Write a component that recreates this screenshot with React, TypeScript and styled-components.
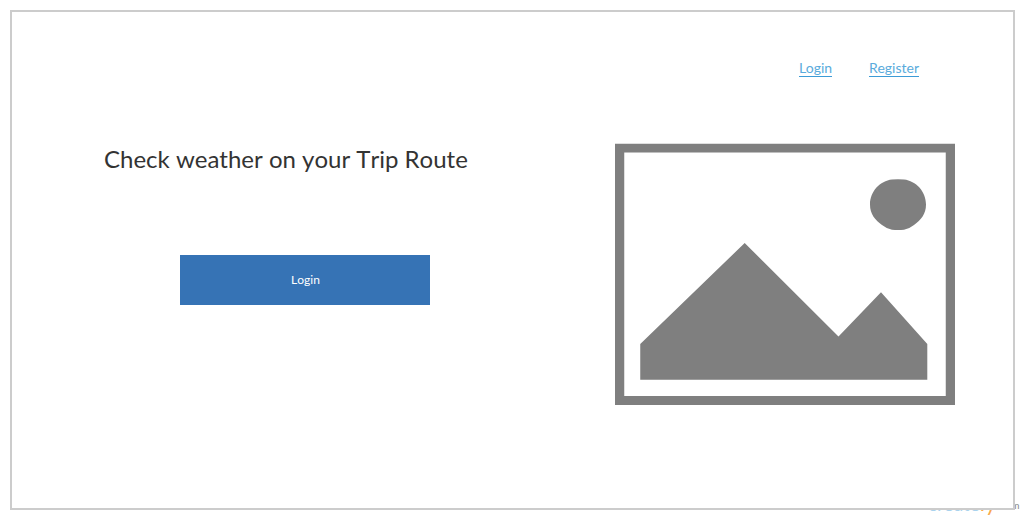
import React from "react";
import styled, { createGlobalStyle } from "styled-components";

const GlobalStyle = createGlobalStyle`
  * { box-sizing: border-box; }
  body { margin: 0; background: #fff; font-family: Lato, "Open Sans", sans-serif; }
`;

const Page = styled.div`
  position: relative;
  width: 1025px;
  height: 520px;
  padding: 10px;
  overflow: hidden;
`;

const Frame = styled.div`
  position: relative;
  width: 1005px;
  height: 500px;
  border: 2px solid #ccc;
  background: #fff;
`;

const Nav = styled.nav`
  display: flex;
  justify-content: flex-end;
  gap: 37px;
  padding: 48px 94px 0 0;
  height: 131px;
`;

const NavLink = styled.a`
  height: 17px;
  font-size: 14px;
  line-height: 16px;
  color: #5aabdc;
  border-bottom: 1px solid #3d9bd6;
  white-space: nowrap;
`;

const Hero = styled.main`
  display: flex;
  justify-content: space-between;
  padding: 0 58px 0 92px;
`;

const Intro = styled.section`
  display: flex;
  flex-direction: column;
  width: 402px;
`;

const Title = styled.h1`
  margin: 0;
  font-size: 24px;
  line-height: 32px;
  font-weight: 400;
  font-kerning: none;
  color: #333;
  white-space: nowrap;
`;

const LoginButton = styled.button`
  width: 250px;
  height: 50px;
  margin: 80px 0 0 76px;
  padding: 0 0 0 1px;
  border: 0;
  background: #3673b5;
  color: #fff;
  font: 400 12px/50px Lato, sans-serif;
  font-kerning: none;
`;

const Picture = styled.svg`
  display: block;
  width: 340px;
  height: 263px;
`;

const Watermark = styled.div`
  position: absolute;
  left: 928px;
  top: 491px;
  display: flex;
  align-items: baseline;
  line-height: 24px;
  white-space: nowrap;
`;

const Brand = styled.span<{ $color: string; $size: number }>`
  color: ${(p) => p.$color};
  font-size: ${(p) => p.$size}px;
  font-weight: 400;
`;

const Domain = styled.span`
  position: absolute;
  left: 70.5px;
  top: 8px;
  font-size: 10px;
  line-height: 12px;
  color: #888;
`;

export default function App() {
  return (
    <>
      <GlobalStyle />
      <Page>
        <Watermark>
          <Brand $color="#a9d3ee" $size={19}>create</Brand>
          <Brand $color="#f9a94b" $size={22}>ly</Brand>
          <Domain>.com</Domain>
        </Watermark>
        <Frame>
          <Nav>
            <NavLink>Login</NavLink>
            <NavLink>Register</NavLink>
          </Nav>
          <Hero>
            <Intro>
              <Title>Check weather on your Trip Route</Title>
              <LoginButton>Login</LoginButton>
            </Intro>
            <Picture viewBox="0 0 340 263" fill="#7f7f7f">
              <path
                fillRule="evenodd"
                d="M0 .75H340V262H0ZM9.25 9.6V253H330.75V9.6Z"
              />
              <path d="M25.25 201L129.7 100L223.5 193.5L266 149.2L312.3 201V236.7H25.25Z" />
              <path d="M277 36.6Q283 36.1 289 36.6C301 38 311 48.5 311 61.5C311 71 306 77 299 82Q294 86 289 86.7Q283 87.3 277 86.7Q272 86 267 82C260 77 255 71 255 61.5C255 48.5 265 38 277 36.6Z" />
            </Picture>
          </Hero>
        </Frame>
      </Page>
    </>
  );
}
